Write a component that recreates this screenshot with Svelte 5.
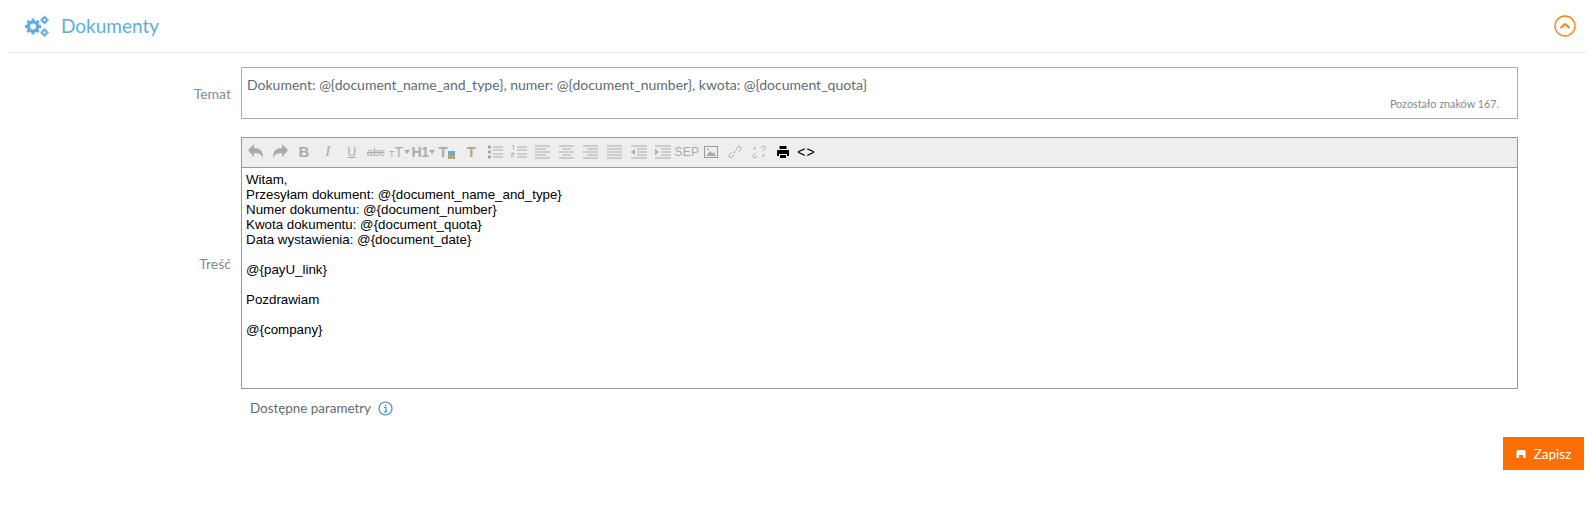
<script>
  const lines = ['Witam,','Przesyłam dokument: @{document_name_and_type}','Numer dokumentu: @{document_number}','Kwota dokumentu: @{document_quota}','Data wystawienia: @{document_date}','','@{payU_link}','','Pozdrawiam','','@{company}'];
  const rows = (ys, xs) => ys.map((y, i) => `M${xs[i][0]} ${y}H${xs[i][1]}`).join('');
  const tools = [
    { d: 'M2 8l6-6v4c6 0 9 3 9 10-2-4-4-5-9-5v4z', fill: 1 },
    { d: 'M18 8l-6-6v4C6 6 3 9 3 16c2-4 4-5 9-5v4z', fill: 1 },
    { t: 'B', c: 'b' },
    { t: 'I', c: 'i' },
    { t: 'U', c: 'u' },
    { t: 'abc', c: 'abc' },
    { t: 'T', c: 'tt', caret: 1, small: 1 },
    { t: 'H1', c: 'h1', caret: 1 },
    { t: 'T', c: 'tb', box: 1 },
    { t: 'T', c: 'tc' },
    { list: 'ul' },
    { list: 'ol' },
    { d: rows([4,7,10,13,16],[[2,17],[2,13],[2,17],[2,13],[2,17]]) },
    { d: rows([4,7,10,13,16],[[2,17],[5,14],[2,17],[5,14],[2,17]]) },
    { d: rows([4,7,10,13,16],[[2,17],[6,17],[2,17],[6,17],[2,17]]) },
    { d: rows([4,7,10,13,16],[[2,17],[2,17],[2,17],[2,17],[2,17]]) },
    { d: rows([4,7,10,13,16],[[2,18],[8,18],[8,18],[8,18],[2,18]]), tri: 'M6 7v6l-4-3z' },
    { d: rows([4,7,10,13,16],[[2,18],[8,18],[8,18],[8,18],[2,18]]), tri: 'M2 7v6l4-3z' },
    { t: 'SEP', c: 'sep' },
    { img: 1 },
    { link: 1 },
    { link: 2 },
    { print: 1 },
    { t: '<>', c: 'code' }
  ];
</script>

<section class="panel">
  <header class="head">
    <div class="title">
      <svg class="gears" viewBox="0 0 24 22" width="24" height="22" aria-hidden="true">
        <circle cx="8" cy="11.500" r="4.600" fill="none" stroke="#5dade2" stroke-width="3.400"/>
        <path d="M8 3.500v16M0 11.500h16M2.300 5.800l11.400 11.400M13.700 5.800L2.300 17.200" stroke="#5dade2" stroke-width="2.800" stroke-dasharray="2.400 11.200" stroke-dashoffset="0"/>
        <circle cx="19.500" cy="5" r="2.200" fill="none" stroke="#5dade2" stroke-width="2"/>
        <circle cx="19.500" cy="17.500" r="2.200" fill="none" stroke="#5dade2" stroke-width="2"/>
        <path d="M19.500 .8v8.400M15.300 5h8.400M19.500 13.300v8.400M15.300 17.500h8.400" stroke="#5dade2" stroke-width="1.500" stroke-dasharray="1.400 5.600"/>
      </svg>
      <h1>Dokumenty</h1>
    </div>
    <svg class="toggle" viewBox="0 0 22 22" width="22" height="22" aria-hidden="true">
      <circle cx="11" cy="11" r="10" fill="none" stroke="#f58220" stroke-width="1.400"/>
      <path d="M6.500 13l4.500-4 4.500 4" fill="none" stroke="#f58220" stroke-width="2" stroke-linejoin="round"/>
    </svg>
  </header>

  <div class="row subject">
    <span class="label">Temat</span>
    <div class="input">
      <div class="value">Dokument: @&#123;document_name_and_type&#125;, numer: @&#123;document_number&#125;, kwota: @&#123;document_quota&#125;</div>
      <div class="count">Pozostało znaków 167.</div>
    </div>
  </div>

  <div class="row body">
    <span class="label">Treść</span>
    <div class="editor">
      <div class="toolbar">
        {#each tools as t}
          <span class="tool {t.c ?? ''}">
            {#if t.t}
              {#if t.small}<small>T</small>{/if}{t.t}
              {#if t.caret}<i class="caret"></i>{/if}
              {#if t.box}<i class="mini"></i>{/if}
            {:else if t.list}
              <svg viewBox="0 0 20 20" width="20" height="20" aria-hidden="true">
                <path d="M8 5h10M8 8h10M8 12h10M8 15h10" stroke="#aaa" fill="none"/>
                {#if t.list === 'ul'}
                  <path d="M3 3.500h3v3H3zM3 8.500h3v3H3zM3 13.500h3v3H3z" fill="#aaa"/>
                {:else}
                  <path d="M3 4l1.500-.5v4M2.500 11h2.500v1.500h-2.500v2h2.500" stroke="#aaa" fill="none" stroke-width=".9"/>
                {/if}
              </svg>
            {:else if t.img}
              <svg viewBox="0 0 20 20" width="20" height="20" aria-hidden="true">
                <rect x="3.500" y="4.500" width="13" height="11" fill="none" stroke="#999"/>
                <path d="M5 14l4-5 2.500 2.500L13 10l2 4z" fill="#aaa"/>
                <circle cx="7" cy="7.500" r="1" fill="#aaa"/>
              </svg>
            {:else if t.link}
              <svg viewBox="0 0 20 20" width="20" height="20" aria-hidden="true">
                {#if t.link === 1}
                  <path d="M9 13l-2 2a1.600 1.600 0 0 1-2.500-2.500l2-2M11 7l2-2a1.600 1.600 0 0 1 2.500 2.500l-2 2M8.500 11.500l3-3" fill="none" stroke="#aaa"/>
                {:else}
                  <path d="M8 14l-1 1.500a1.600 1.600 0 0 1-2.500-2.500l2-2M12 6l1-1.500a1.600 1.600 0 0 1 2.500 2.500l-2 2M6 5v2M4 7h2M14 13h2M14 15v-2" fill="none" stroke="#aaa"/>
                {/if}
              </svg>
            {:else if t.print}
              <svg viewBox="0 0 20 20" width="20" height="20" aria-hidden="true">
                <path d="M6.500 4h7v3h-7zM4 8h12v6h-2v-2H6v2H4zM7 13h6v3H7z" fill="#000"/>
              </svg>
            {:else}
              <svg viewBox="0 0 20 20" width="20" height="20" aria-hidden="true">
                {#if t.fill}
                  <path d={t.d} fill="#aaa"/>
                {:else}
                  <path d={t.d} fill="none" stroke="#aaa"/>
                {/if}
                {#if t.tri}<path d={t.tri} fill="#aaa"/>{/if}
              </svg>
            {/if}
          </span>
        {/each}
      </div>
      <div class="content">
        {#each lines as l}
          <div class="line">{l || '\u00a0'}</div>
        {/each}
      </div>
    </div>
  </div>

  <div class="params">
    <span>Dostępne parametry</span>
    <svg viewBox="0 0 15 15" width="15" height="15" aria-hidden="true">
      <circle cx="7.500" cy="7.500" r="6.500" fill="none" stroke="#3d8fc9" stroke-width="1.200"/>
      <path d="M7.500 3.500v1.500M6 6.500h2v4.500M6 11h3.200" fill="none" stroke="#3d8fc9" stroke-width="1.200"/>
    </svg>
  </div>

  <div class="actions">
    <button type="button">
      <svg viewBox="0 0 10 10" width="10" height="10" aria-hidden="true">
        <path d="M1.500 1h7l1 1v7h-9V2zM3 6v3h4V6z" fill="#fff"/>
      </svg>
      Zapisz
    </button>
  </div>
</section>

<style>
  :global(body) { margin: 0; background: #fff; }
  .panel { font-family: "Lato", "Liberation Sans", sans-serif; padding: 0 10px; height: 517px; box-sizing: border-box; }
  .head { display: flex; align-items: center; justify-content: space-between; height: 51px; border-bottom: 1px solid #efe8d8; padding: 0 10px 1px 15px; box-sizing: content-box; }
  .title { display: flex; align-items: center; gap: 12px; }
  h1 { margin: 0; font-size: 19px; font-weight: 400; color: #5dade2; }
  .row { display: flex; }
  .label { width: 231px; flex: none; padding-right: 10px; box-sizing: border-box; text-align: right; font-size: 14px; color: #7f8c96; }
  .subject { margin-top: 14px; }
  .subject .label { padding-top: 18px; }
  .input { width: 1277px; height: 52px; box-sizing: border-box; border: 1px solid #aaa; padding: 8px 5px; position: relative; }
  .value { font-size: 14px; color: #5f6b73; line-height: 18px; }
  .count { font-size: 10.800px; color: #808a92; text-align: right; margin: 3px 13px 0 0; line-height: 14px; }
  .body { margin-top: 18px; align-items: center; }
  .editor { width: 1277px; box-sizing: border-box; border: 1px solid #999; }
  .toolbar { display: flex; align-items: center; height: 29px; background: #eee; border-bottom: 1px solid #999; padding: 0 0 2px 2px; box-sizing: border-box; height: 30px; }
  .tool { width: 23.950px; flex: none; height: 20px; display: flex; align-items: center; justify-content: center; color: #aaa; font-family: "Liberation Sans", sans-serif; font-size: 13px; position: relative; }
  .tool svg { display: block; }
  .b { font-weight: 700; font-size: 15px; }
  .i { font-style: italic; font-family: "Liberation Serif", serif; font-size: 15px; }
  .u { text-decoration: underline; font-size: 12px; }
  .abc { font-size: 11px; text-decoration: line-through; text-decoration-thickness: 1px; }
  .tt, .h1 { font-size: 14px; }
  small { font-size: 9px; margin-top: 4px; }
  .h1 { font-weight: 700; letter-spacing: -.5px; }
  .tb { font-size: 15px; font-weight: 700; justify-content: flex-start; padding-left: 3px; box-sizing: border-box; }
  .tc { font-size: 15px; font-weight: 700; color: #b8a878; }
  .sep { font-size: 12px; letter-spacing: .2px; }
  .code { color: #000; font-size: 14px; letter-spacing: 1px; }
  .caret { width: 0; height: 0; border-left: 3px solid transparent; border-right: 3px solid transparent; border-top: 4px solid #aaa; margin-left: 1px; }
  .mini { position: absolute; right: 4px; bottom: 3px; width: 7px; height: 8px; background: #b7a878; border-top: 4px solid #6da9c9; box-sizing: border-box; }
  .content { height: 220px; box-sizing: border-box; padding: 4px 4px; font-family: "Liberation Sans", Arial, sans-serif; font-size: 13.333px; line-height: 15px; color: #000; }
  .params { display: flex; align-items: center; gap: 7px; margin: 9px 0 0 240px; font-size: 13.400px; color: #5f6b73; height: 20px; }
  .actions { display: flex; justify-content: flex-end; margin: 19px 2px 0 0; }
  button { display: flex; align-items: center; justify-content: center; gap: 8px; width: 81px; height: 33px; border: 0; background: #ff6f00; color: #fff; font: 13.500px "Lato", sans-serif; padding: 0; }
</style>
